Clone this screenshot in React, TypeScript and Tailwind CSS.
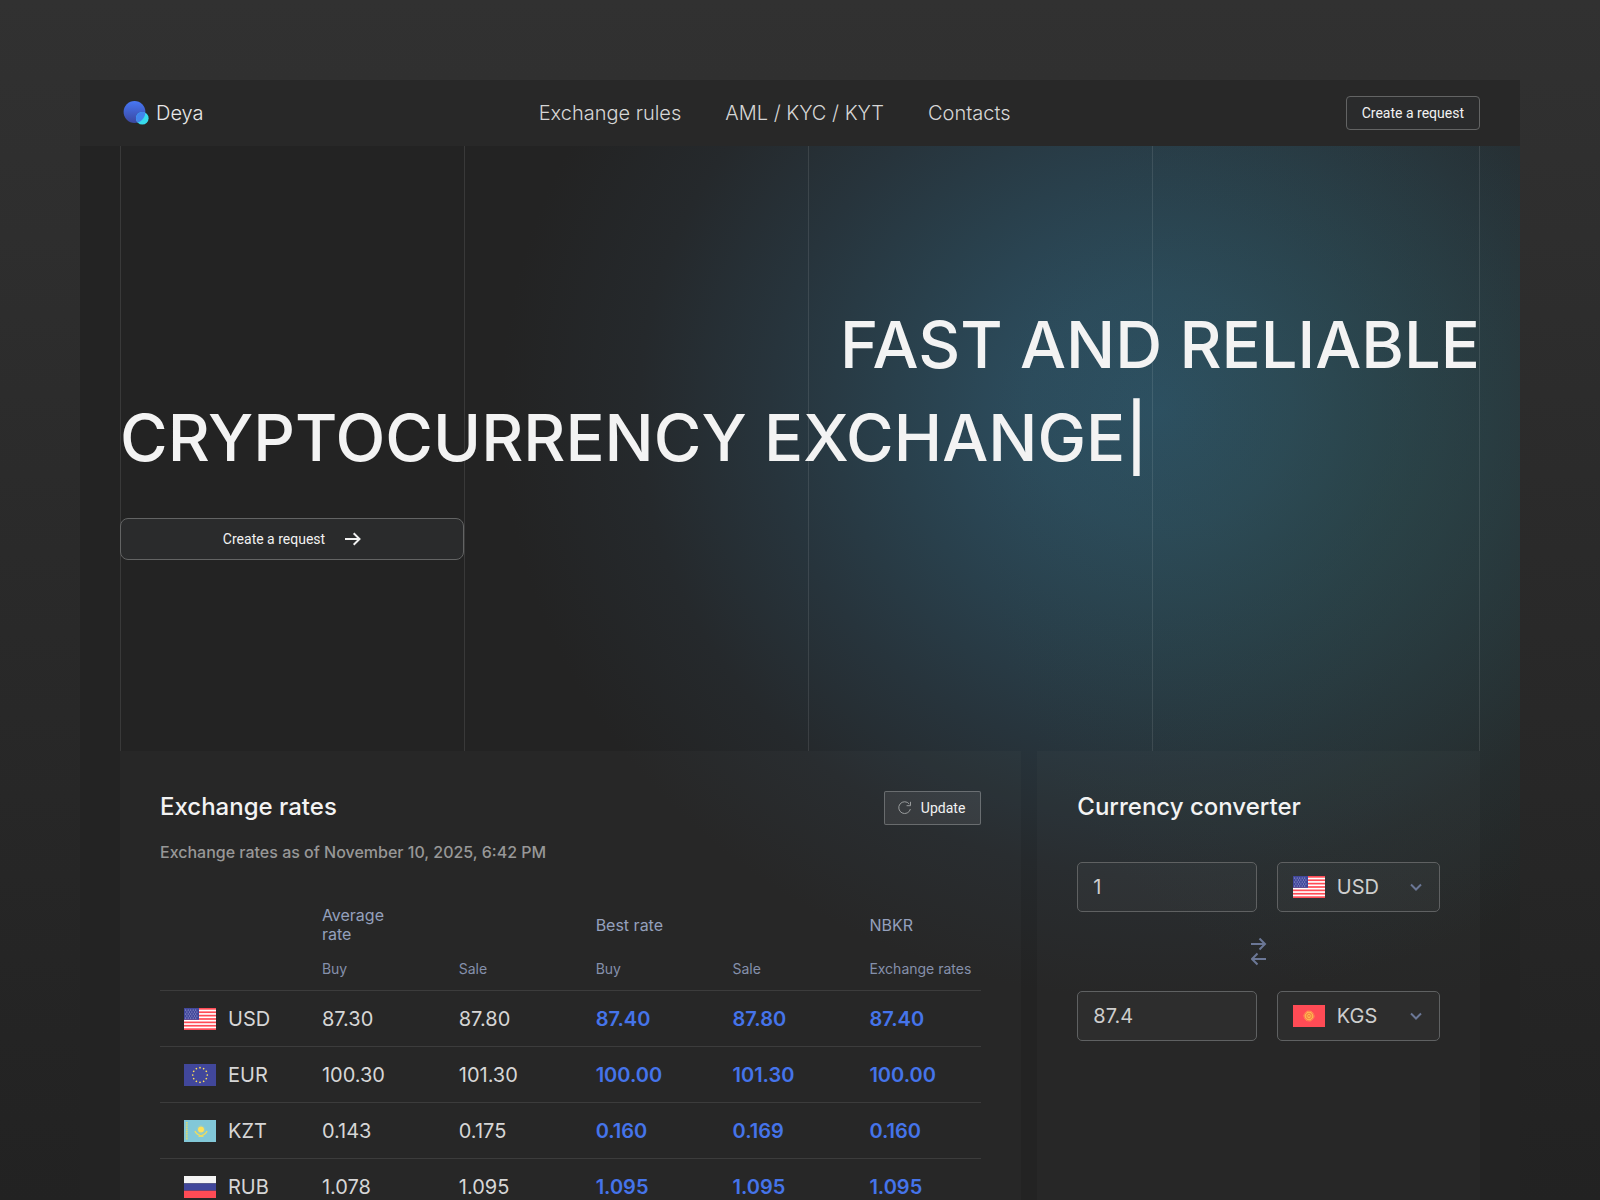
type Rate = {
    code: string
    average: [string, string]
    best: [string, string]
    nbkr: string
}

const rates: Rate[] = [
    { code: 'USD', average: ['87.30', '87.80'], best: ['87.40', '87.80'], nbkr: '87.40' },
    { code: 'EUR', average: ['100.30', '101.30'], best: ['100.00', '101.30'], nbkr: '100.00' },
    { code: 'KZT', average: ['0.143', '0.175'], best: ['0.160', '0.169'], nbkr: '0.160' },
    { code: 'RUB', average: ['1.078', '1.095'], best: ['1.095', '1.095'], nbkr: '1.095' },
]

const stripes = [0, 1, 2, 3, 4, 5, 6]
const starRows = [2, 4, 6, 8, 10]
const starCols = [1, 3.5, 6, 8.5, 11]
const euStars = [0, 30, 60, 90, 120, 150, 180, 210, 240, 270, 300, 330]

function Flag({ code }: { code: string }) {
    return (
        <svg viewBox="0 0 32 22" className="w-8 h-[22px] shrink-0" aria-hidden="true">
            {code === 'USD' && (
                <>
                    <rect width="32" height="22" fill="#fff" />
                    {stripes.map((i) => (
                        <rect key={i} y={i * 3.38} width="32" height="1.7" fill="#ff4b55" />
                    ))}
                    <rect width="15" height="11.8" fill="#41479b" />
                    {starRows.map((y, row) =>
                        starCols.map((x) => (
                            <circle key={`${x}-${y}`} cx={x + (row % 2 ? 1.9 : 0.7)} cy={y} r="0.55" fill="#b9bce0" />
                        ))
                    )}
                </>
            )}
            {code === 'EUR' && (
                <>
                    <rect width="32" height="22" fill="#41479b" />
                    {euStars.map((a) => (
                        <circle key={a} cx="16" cy="3.7" r="0.85" fill="#ffe15a" transform={`rotate(${a} 16 11)`} />
                    ))}
                </>
            )}
            {code === 'KZT' && (
                <>
                    <rect width="32" height="22" fill="#82c8d8" />
                    <path d="M2.800 2v18" stroke="#d5d878" strokeWidth="1.800" strokeDasharray="1.600 0.600" />
                    <circle cx="17" cy="9.5" r="3" fill="#ffe15a" />
                    <circle cx="17" cy="9.5" r="3.8" fill="none" stroke="#d6d97a" strokeWidth="0.6" strokeDasharray="0.6 0.6" />
                    <path d="M11 11c.8 2.800 3 3.600 6 5 3-1.400 5.200-2.200 6-5" fill="none" stroke="#ecdc60" strokeWidth="1.3" />
                    <path d="M14.500 16.500h5" stroke="#e3dc6c" />
                </>
            )}
            {code === 'RUB' && (
                <>
                    <rect width="32" height="7.4" fill="#f5f5f5" />
                    <rect y="7.4" width="32" height="7.3" fill="#41479b" />
                    <rect y="14.7" width="32" height="7.3" fill="#ff4b55" />
                </>
            )}
            {code === 'KGS' && (
                <>
                    <rect width="32" height="22" fill="#ff4b55" />
                    <circle cx="16" cy="11" r="4.4" fill="#ffb950" />
                    <circle cx="16" cy="11" r="5" fill="none" stroke="#ffb950" strokeDasharray="0.8 0.6" />
                    <circle cx="16" cy="11" r="2.8" fill="none" stroke="#f0703c" strokeWidth="0.7" />
                    <path d="M14 9.500q2 1 4 3M18 9.500q-2 1-4 3" fill="none" stroke="#f0703c" strokeWidth="0.6" />
                </>
            )}
        </svg>
    )
}

function Logo() {
    return (
        <svg viewBox="0 0 26 26" className="w-[26px] h-[26px]" aria-hidden="true">
            <defs>
                <linearGradient id="logo" x1="0" y1="0" x2="0" y2="1">
                    <stop offset="0" stopColor="#4777f5" />
                    <stop offset="1" stopColor="#3b479f" />
                </linearGradient>
                <clipPath id="logo-clip">
                    <circle cx="11.500" cy="12" r="10.900" />
                </clipPath>
            </defs>
            <circle cx="11.500" cy="12" r="10.900" fill="url(#logo)" />
            <circle cx="19.300" cy="18.300" r="6.300" fill="#37dbec" />
            <circle cx="19.300" cy="18.300" r="6.300" fill="#4284ee" clipPath="url(#logo-clip)" />
        </svg>
    )
}

function Header() {
    return (
        <header className="relative flex items-center justify-between h-[66px] px-10 bg-[#282828]">
            <a href="#home" className="flex items-center gap-[7px] pl-[3px] text-xl font-light text-[#e8e8e8]">
                <Logo />
                Deya
            </a>
            <nav className="flex gap-11 text-xl font-light text-[#d6d6d6]">
                <a href="#rules">Exchange rules</a>
                <a href="#aml">AML / KYC / KYT</a>
                <a href="#contacts">Contacts</a>
            </nav>
            <button className="h-[34px] px-[15px] rounded border border-[#636464] bg-[#2a2b2c] font-[Roboto,sans-serif] text-sm text-[#f2f2f2]">
                Create a request
            </button>
        </header>
    )
}

function Hero() {
    return (
        <section className="relative px-10">
            <div className="absolute inset-y-0 inset-x-10 grid grid-cols-4 gap-4" aria-hidden="true">
                <div className="border-l border-white/10" />
                <div className="border-l border-white/10" />
                <div className="border-l border-white/10" />
                <div className="border-x border-white/10" />
            </div>
            <div className="relative pt-[152px] pb-[191px]">
                <h1 className="text-[65px] leading-[93px] font-medium text-[#f3f3f3]">
                    <span className="block text-right">FAST AND RELIABLE</span>
                    <span className="block">CRYPTOCURRENCY EXCHANGE|</span>
                </h1>
                <button className="flex items-center justify-center gap-5 mt-[34px] w-[344px] h-[42px] rounded-lg border border-[#636464] bg-[#2a2b2c] font-[Roboto,sans-serif] text-sm text-[#f2f2f2]">
                    Create a request
                    <svg viewBox="0 0 16 16" className="w-4 h-4" fill="none" stroke="currentColor" strokeWidth="2" aria-hidden="true">
                        <path d="M0 8h14.500M8.700 2.200L14.500 8l-5.800 5.800" />
                    </svg>
                </button>
            </div>
        </section>
    )
}

function ExchangeRates() {
    return (
        <section className="col-span-8 p-10 bg-white/2">
            <div className="flex items-start justify-between">
                <h2 className="text-2xl font-medium text-[#f3f3f3]">Exchange rates</h2>
                <button className="flex items-center gap-2 h-[34px] pl-3 pr-[15px] rounded-xs border border-white/25 bg-white/7 font-[Roboto,sans-serif] text-sm text-[#f2f2f2]">
                    <svg viewBox="0 0 16 16" className="w-4 h-4" fill="none" stroke="#989b9c" aria-hidden="true">
                        <path d="M12.300 4A5.900 5.900 0 1 0 13.400 9" />
                        <path d="M13.500 1.800v3.900H9.600" />
                    </svg>
                    Update
                </button>
            </div>
            <p className="mt-[15px] text-base font-medium text-[#979797]">Exchange rates as of November 10, 2025, 6:42 PM</p>
            <table className="mt-[27px] w-full table-fixed border-collapse text-left">
                <thead className="text-[#94a0bd]">
                    <tr className="text-base leading-[19px]">
                        <td />
                        <th className="pt-[15px] pb-[3px] pl-[25px] pr-6 font-normal">Average rate</th>
                        <td />
                        <th className="pt-[15px] pb-[3px] pl-[25px] font-normal">Best rate</th>
                        <td />
                        <th className="pt-[15px] pb-[3px] pl-[25px] font-normal">NBKR</th>
                    </tr>
                    <tr className="h-[43px] text-sm whitespace-nowrap text-[#8590ab] border-b border-[#3c3c3c]">
                        <td />
                        <th className="pt-[2px] pl-[25px] font-normal">Buy</th>
                        <th className="pt-[2px] pl-[25px] font-normal">Sale</th>
                        <th className="pt-[2px] pl-[25px] font-normal">Buy</th>
                        <th className="pt-[2px] pl-[25px] font-normal">Sale</th>
                        <th className="pt-[2px] pl-[25px] font-normal">Exchange rates</th>
                    </tr>
                </thead>
                <tbody className="text-xl text-[#d6d6d6]">
                    {rates.map((rate) => (
                        <tr key={rate.code} className="h-14 border-b border-[#3c3c3c]">
                            <th className="pt-[2px] pl-6 font-normal">
                                <div className="flex items-center gap-3">
                                    <Flag code={rate.code} />
                                    {rate.code}
                                </div>
                            </th>
                            <td className="pt-[2px] pl-[25px]">{rate.average[0]}</td>
                            <td className="pt-[2px] pl-[25px]">{rate.average[1]}</td>
                            <td className="pt-[2px] pl-[25px] font-semibold text-[#4574ea]">{rate.best[0]}</td>
                            <td className="pt-[2px] pl-[25px] font-semibold text-[#4574ea]">{rate.best[1]}</td>
                            <td className="pt-[2px] pl-[25px] font-semibold text-[#4574ea]">{rate.nbkr}</td>
                        </tr>
                    ))}
                </tbody>
            </table>
        </section>
    )
}

function ConverterRow({ label, amount, code }: { label: string; amount: string; code: string }) {
    return (
        <div className="grid grid-cols-[11fr_10fr] gap-5 text-xl text-[#cecece]">
            <input
                aria-label={`${label} amount`}
                defaultValue={amount}
                className="w-full h-[50px] px-[15px] rounded-[5px] border border-[#5f6162] bg-white/3"
            />
            <div className="flex items-center gap-3 h-[50px] px-[15px] rounded-[5px] border border-[#5f6162] bg-white/3">
                <Flag code={code} />
                <select aria-label={`${label} currency`} defaultValue={code} className="flex-1 min-w-0 appearance-none bg-transparent">
                    <option>{code}</option>
                </select>
                <svg viewBox="0 0 16 16" className="w-4 h-4 shrink-0" fill="none" stroke="#6b7796" strokeWidth="2" aria-hidden="true">
                    <path d="M3 5.500l5 5 5-5" />
                </svg>
            </div>
        </div>
    )
}

function Converter() {
    return (
        <section className="col-span-4 p-10 bg-white/2">
            <h2 className="text-2xl font-medium text-[#f3f3f3]">Currency converter</h2>
            <div className="mt-[39px]">
                <ConverterRow label="From" amount="1" code="USD" />
                <button aria-label="Swap currencies" className="flex items-center justify-center w-full h-[79px]">
                    <svg viewBox="0 0 16 28" className="w-4 h-7" fill="none" stroke="#6b7796" strokeWidth="2" aria-hidden="true">
                        <path d="M0 6h14.500M8.500 .5l5.500 5.500-5.500 5.500" />
                        <path d="M15 21H1M6.500 15.500L1 21l5.500 5.500" />
                    </svg>
                </button>
                <ConverterRow label="To" amount="87.4" code="KGS" />
            </div>
        </section>
    )
}

export default function App() {
    return (
        <div className="flex flex-col h-screen overflow-hidden px-20 pt-20 bg-linear-to-b from-[#313131] to-[#222222] font-[Inter,sans-serif]">
            <div className="relative flex-1 bg-[#232323]">
                <div className="absolute inset-0 bg-[radial-gradient(ellipse_420px_500px_at_1320px_420px,#2b443c60_0%,#2b443c00_100%),radial-gradient(ellipse_660px_590px_at_1080px_330px,#2d5267_0%,#2c4c5d_20%,#29404c_40%,#27343c_59%,#25292c_79%,#23232300_100%)]" />
                <Header />
                <Hero />
                <main className="relative grid grid-cols-12 gap-4 mx-10">
                    <ExchangeRates />
                    <Converter />
                </main>
            </div>
        </div>
    )
}
